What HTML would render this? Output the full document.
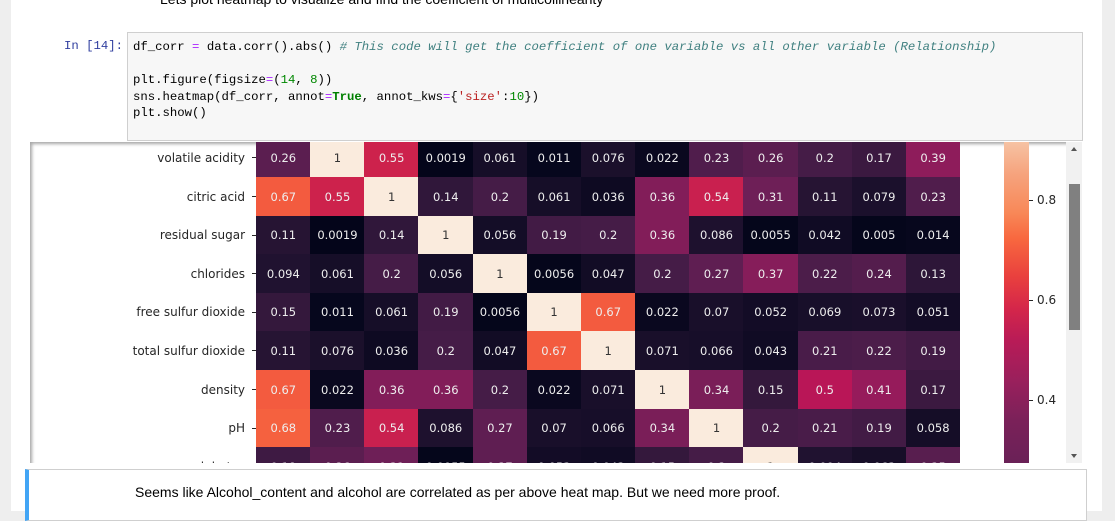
<!DOCTYPE html>
<html><head><meta charset="utf-8"><style>
body{margin:0;width:1115px;height:511px;overflow:hidden;background:#eeeeee;position:relative;font-family:"Liberation Sans",sans-serif}
#page{position:absolute;left:11px;top:0;width:1091px;height:511px;background:#fff}
.a{position:absolute}
#code{left:127px;top:32px;width:954px;height:107px;background:#f7f7f7;border:1px solid #cfcfcf}
.mono{font-family:"Liberation Mono",monospace;font-size:12.3px;white-space:pre;color:#000}
#out{left:30px;top:142px;width:1052px;height:321px;background:#fff;overflow:hidden;box-shadow:inset 3px 3px 3px -1px rgba(0,0,0,.35)}
.c{position:absolute;display:flex;align-items:center;justify-content:center;font-family:"DejaVu Sans",sans-serif;font-size:11.5px}
.lab{position:absolute;right:821px;font-family:"DejaVu Sans",sans-serif;font-size:12px;color:#262626;white-space:nowrap}
.tk{position:absolute;width:4px;height:1px;background:#262626}
</style></head><body>
<div id="page"></div>
<div class="a" style="left:160px;top:-9px;font-size:14px;color:#000">Lets plot heatmap to visualize and find the coefficient of multicollinearity</div>
<div class="a mono" style="left:64px;top:39px;color:#303f9f">In [14]:</div>
<div class="a" id="code"></div>
<div class="a mono" style="left:133px;top:39px;line-height:16.5px">df_corr <span style="color:#aa22ff">=</span> data.corr().abs() <span style="color:#408080;font-style:italic"># This code will get the coefficient of one variable vs all other variable (Relationship)</span>

plt.figure(figsize<span style="color:#aa22ff">=</span>(<span style="color:#080">14</span>, <span style="color:#080">8</span>))
sns.heatmap(df_corr, annot<span style="color:#aa22ff">=</span><span style="color:#008000;font-weight:bold">True</span>, annot_kws<span style="color:#aa22ff">=</span>{<span style="color:#ba2121">'size'</span>:<span style="color:#080">10</span>})
plt.show()</div>
<div class="a" id="out"></div>
<div class="a" style="left:1004px;top:142px;width:25px;height:321px;background:linear-gradient(#f6c3a3 0%,#f6a37d 10%,#f88858 22%,#f8683f 30%,#e9403e 42%,#d4264a 52%,#b81b57 62%,#98205c 75%,#7a2159 87%,#6a2157 100%)"></div>
<div class="tk" style="left:1029px;top:200px"></div><div class="a" style="left:1037px;top:193px;font-family:'DejaVu Sans',sans-serif;font-size:12px;color:#262626">0.8</div>
<div class="tk" style="left:1029px;top:300px"></div><div class="a" style="left:1037px;top:293px;font-family:'DejaVu Sans',sans-serif;font-size:12px;color:#262626">0.6</div>
<div class="tk" style="left:1029px;top:400px"></div><div class="a" style="left:1037px;top:393px;font-family:'DejaVu Sans',sans-serif;font-size:12px;color:#262626">0.4</div>
<div class="a" style="left:1066px;top:142px;width:16px;height:321px;background:#f1f1f1"></div>
<div class="a" style="left:1069px;top:184px;width:11px;height:146px;background:#808080"></div>
<div class="a" style="left:1071px;top:147px;width:0;height:0;border:3.5px solid transparent;border-bottom:4px solid #555;border-top:0"></div>
<div class="a" style="left:1071px;top:454px;width:0;height:0;border:3.5px solid transparent;border-top:4px solid #555;border-bottom:0"></div>
<div id="hm"></div>
<div class="a" style="left:25px;top:469px;width:1057px;height:50px;border:1px solid #cfcfcf;border-left:4px solid #42a5f5;background:#fff"></div>
<div class="a" style="left:135px;top:484px;font-size:14px;color:#000">Seems like Alcohol_content and alcohol are correlated as per above heat map. But we need more proof.</div>
<script>
var stops=[[0,[3,5,26]],[.1,[34,19,49]],[.2,[69,28,71]],[.3,[106,31,86]],[.4,[146,28,91]],[.5,[185,22,87]],[.6,[225,46,66]],[.7,[250,110,62]],[.8,[247,150,106]],[.9,[246,188,155]],[1,[250,235,221]]];
function col(v){for(var i=1;i<stops.length;i++){if(v<=stops[i][0]){var a=stops[i-1],b=stops[i],t=(v-a[0])/(b[0]-a[0]);return 'rgb('+[0,1,2].map(function(k){return Math.round(a[1][k]+(b[1][k]-a[1][k])*t)}).join(',')+')';}}return 'rgb(250,235,221)';}
var rows=[["volatile acidity","0.26 1 0.55 0.0019 0.061 0.011 0.076 0.022 0.23 0.26 0.2 0.17 0.39"],
["citric acid","0.67 0.55 1 0.14 0.2 0.061 0.036 0.36 0.54 0.31 0.11 0.079 0.23"],
["residual sugar","0.11 0.0019 0.14 1 0.056 0.19 0.2 0.36 0.086 0.0055 0.042 0.005 0.014"],
["chlorides","0.094 0.061 0.2 0.056 1 0.0056 0.047 0.2 0.27 0.37 0.22 0.24 0.13"],
["free sulfur dioxide","0.15 0.011 0.061 0.19 0.0056 1 0.67 0.022 0.07 0.052 0.069 0.073 0.051"],
["total sulfur dioxide","0.11 0.076 0.036 0.2 0.047 0.67 1 0.071 0.066 0.043 0.21 0.22 0.19"],
["density","0.67 0.022 0.36 0.36 0.2 0.022 0.071 1 0.34 0.15 0.5 0.41 0.17"],
["pH","0.68 0.23 0.54 0.086 0.27 0.07 0.066 0.34 1 0.2 0.21 0.19 0.058"],
["sulphates","0.18 0.26 0.31 0.0055 0.27 0.053 0.043 0.15 0.2 1 0.094 0.063 0.25"]];
var h='<div class="a" style="left:0;top:142px;width:1066px;height:321px;overflow:hidden">';
var y0=138.4-142,rh=38.6,x0=256,cw=54.15;
rows.forEach(function(r,i){var top=y0+i*rh;
h+='<div class="lab" style="top:'+(top+12.5)+'px">'+r[0]+'</div><div class="tk" style="left:252px;top:'+Math.round(top+19)+'px"></div>';
r[1].split(' ').forEach(function(s,j){var v=parseFloat(s);
h+='<div class="c" style="left:'+(x0+j*cw)+'px;top:'+top+'px;width:'+(cw+0.5)+'px;height:'+(rh+0.5)+'px;background:'+col(v)+';color:'+(v>0.8?'#333':'#eee')+'">'+s+'</div>';});});
h+='</div>';document.getElementById('hm').innerHTML=h;
</script>
</body></html>
